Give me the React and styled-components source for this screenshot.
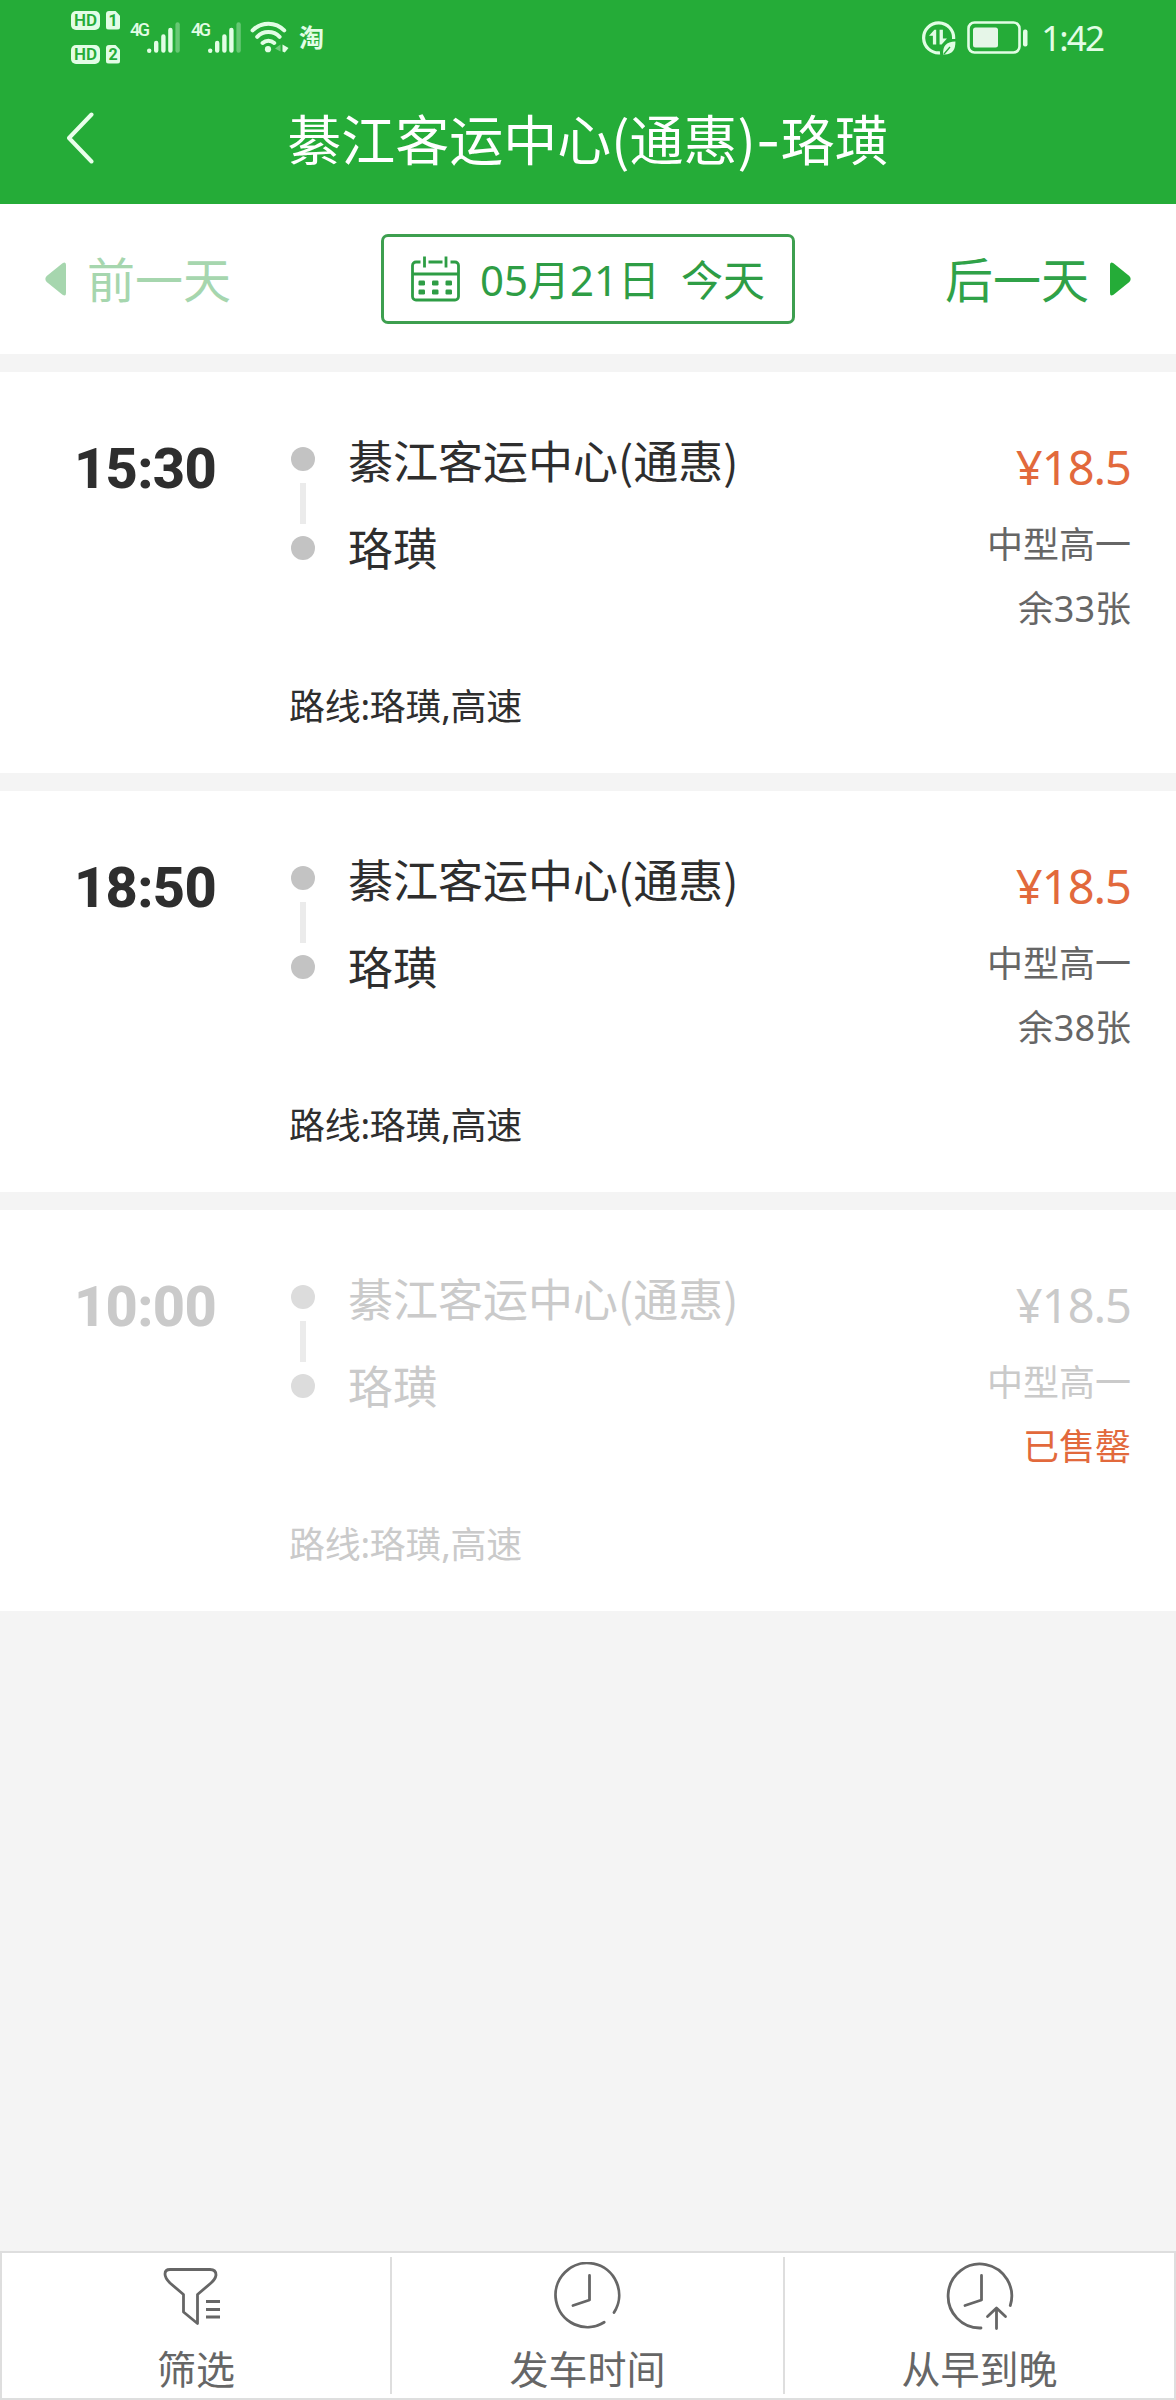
import React from "react";
import styled, { createGlobalStyle } from "styled-components";

const GREEN = "#25ac38";
const STATUS = "#e2fde5";
const LATIN = '"Noto Sans", "Noto Sans CJK SC", sans-serif';
const CJK = '"Noto Sans CJK SC", "Noto Sans", sans-serif';

const GlobalStyle = createGlobalStyle`
  * { box-sizing: border-box; }
  body { margin: 0; background: #f4f4f4; font-family: ${LATIN}; }
  svg { display: block; flex: none; }
`;

const Screen = styled.div`
  width: 1176px;
  min-height: 2400px;
  display: flex;
  flex-direction: column;
  background: #f4f4f4;
  white-space: nowrap;
`;

const Header = styled.header`
  height: 204px;
  background: ${GREEN};
  color: #fff;
`;

const StatusBar = styled.div`
  height: 75px;
  padding: 0 73px 0 71px;
  display: flex;
  justify-content: space-between;
  align-items: center;
  color: ${STATUS};
`;

const StatusGroup = styled.div`
  display: flex;
  align-items: center;
`;

const SimColumn = styled.div`
  display: grid;
  gap: 15px;
  margin-right: 10px;
  padding-bottom: 1px;
`;

const SimRow = styled.div`
  display: flex;
  gap: 6px;
`;

const HdBadge = styled.span`
  width: 29px;
  height: 19px;
  border-radius: 5px;
  background: ${STATUS};
  color: ${GREEN};
  font: 600 17px/19px "Roboto", sans-serif;
  text-align: center;
`;

const SimBadge = styled.span`
  width: 14px;
  height: 19px;
  border-radius: 3px;
  clip-path: polygon(0 0, 65% 0, 100% 28%, 100% 100%, 0 100%);
  background: ${STATUS};
  color: ${GREEN};
  font: 700 16px/20px "Roboto", sans-serif;
  text-align: center;
`;

const Signal = styled.div`
  display: flex;
  align-items: flex-start;
  width: 61px;
  height: 31px;
  padding-bottom: 1px;
`;

const Network = styled.span`
  width: 16px;
  font: 500 18px/15px "Roboto", sans-serif;
  letter-spacing: -2.4px;
`;

const WifiSlot = styled.span`
  margin: 0 0 2px -2px;
`;

const TaoBadge = styled.span`
  margin: 0 0 3px 10px;
  font: 700 25px/28px ${CJK};
`;

const BatterySlot = styled.span`
  margin: 0 12px 0 11px;
`;

const Clock = styled.span`
  font-size: 35px;
  line-height: 50px;
  letter-spacing: -1.9px;
`;

const NavBar = styled.div`
  height: 129px;
  padding: 0 67px 4px;
  display: grid;
  grid-template-columns: 1fr auto 1fr;
  align-items: center;
`;

const Title = styled.h1`
  margin: 0;
  padding-top: 5px;
  font: 400 54px/80px ${CJK};
`;

const Dash = styled.span`
  font-family: "Inter", sans-serif;
`;

const DateBar = styled.div`
  height: 150px;
  padding: 0 45px;
  display: grid;
  grid-template-columns: 1fr 414px 1fr;
  align-items: center;
  background: #fff;
`;

const DayLink = styled.div`
  display: flex;
  align-items: center;
  justify-content: ${(p) => (p.$end ? "flex-end" : "flex-start")};
  gap: 21px;
  color: ${(p) => (p.$muted ? "#a6d6ae" : "#30a248")};
  font-size: 48px;
  line-height: 70px;
`;

const DayLabel = styled.span`
  padding-top: 2px;
`;

const DateButton = styled.div`
  height: 90px;
  padding-left: 27px;
  border: 3px solid #3d9f4f;
  border-radius: 7px;
  display: flex;
  align-items: center;
  color: #2e9d45;
  font-size: 42px;
  line-height: 60px;
`;

const DateText = styled.span`
  margin: 2px 0 0 ${(p) => p.$gap}px;
`;

const List = styled.main`
  flex: 1;
  padding-top: 18px;
  display: flex;
  flex-direction: column;
  gap: 18px;
`;

const Card = styled.article`
  height: 401px;
  padding: 44px 45px 0 0;
  display: grid;
  grid-template-columns: 289px 59px 1fr auto;
  grid-template-rows: 225px 50px;
  row-gap: 41px;
  background: #fff;
  color: ${(p) => (p.$sold ? "#cacaca" : "#2e2e2e")};
`;

const Time = styled.div`
  padding: 15px 0 0 74px;
  font: 800 56px/76px "Roboto", sans-serif;
  letter-spacing: -0.7px;
`;

const Track = styled.div`
  padding: 31px 0 0 2px;
  width: 26px;
  display: flex;
  flex-direction: column;
  align-items: center;
  gap: 12px;
`;

const Dot = styled.span`
  width: 24px;
  height: 24px;
  border-radius: 50%;
  background: ${(p) => (p.$sold ? "#dcdcdc" : "#c3c3c3")};
`;

const Link = styled.span`
  width: 6px;
  height: 41px;
  background: #ebebeb;
`;

const Stations = styled.div`
  font: 400 45px/87px ${CJK};
`;

const Fare = styled.div`
  padding-top: 6px;
  text-align: right;
  color: ${(p) => (p.$sold ? "#cacaca" : "#666")};
  font-size: 36px;
  line-height: 64px;
`;

const Price = styled.div`
  color: ${(p) => (p.$sold ? "#cacaca" : "#e2693c")};
  font-size: 47px;
  line-height: 91px;
  letter-spacing: -1px;
`;

const Remaining = styled.div`
  color: ${(p) => (p.$sold ? "#e2693c" : "inherit")};
`;

const RouteNote = styled.div`
  grid-column: 2 / -1;
  font-size: 36px;
  line-height: 50px;
  letter-spacing: -0.3px;
`;

const TabBar = styled.footer`
  height: 149px;
  border: 2px solid #dedede;
  display: grid;
  grid-template-columns: 390px 393px 1fr;
  padding: 4px 0;
  background: #fff;
`;

const Tab = styled.div`
  padding-top: 5px;
  display: flex;
  flex-direction: column;
  align-items: center;
  color: #666;
  font-size: 39px;
  line-height: 50px;
  border-right: ${(p) => (p.$last ? 0 : 2)}px solid #dedede;
`;

const TabLabel = styled.span`
  margin-top: 12px;
`;

function SignalBars() {
  return (
    <svg width="34" height="31" viewBox="0 0 34 31" fill="none" stroke="currentColor" strokeWidth="4.4" strokeLinecap="round">
      <path d="M3.2 28.6v.1M10.2 21v7.6M17.4 14.5v14.1M24.4 8v20.6" />
      <path d="M31.6 2.5v26.1" opacity=".35" />
    </svg>
  );
}

function Wifi() {
  return (
    <svg width="39" height="32" viewBox="0 0 39 32" fill="none" stroke="currentColor" strokeWidth="4" strokeLinecap="round">
      <path d="M2.6 9.4a22 22 0 0 1 31.6 0M7.2 15.8a15.5 15.5 0 0 1 22.4 0M12.6 22a8.8 8.8 0 0 1 11.6 0" />
      <circle cx="18" cy="28.2" r="3.1" fill="currentColor" stroke="none" />
      <path d="M30.5 23.5v7L25 27.5z" fill="currentColor" stroke="none" opacity=".4" />
      <path d="M32.5 23.5l6 3.4-3.7 4.6-2.3-1z" fill="currentColor" stroke="none" />
    </svg>
  );
}

function DataSaver() {
  return (
    <svg width="34" height="34" viewBox="0 0 34 34" fill="none" stroke="currentColor">
      <path d="M18 31.8A15 15 0 1 1 31.6 18" strokeWidth="3.2" />
      <path d="M7 14.8L12.4 8.8H14.2V23.6H10.9V14.8zM25 17.6L19.6 23.6H17.6V8.8H20.9V17.6z" fill="currentColor" stroke="none" />
      <path d="M33.4 20.5C24 21 20.5 25 21.2 33.4 30 34 33.6 29 33.4 20.5z" fill="currentColor" stroke="none" />
      <path d="M22 33l6-7" stroke={GREEN} strokeWidth="1.3" />
    </svg>
  );
}

function Battery() {
  return (
    <svg width="62" height="34" viewBox="0 0 62 34">
      <rect x="1.5" y="1.5" width="51" height="30" rx="6" fill="none" stroke="currentColor" strokeWidth="2.6" />
      <rect x="6" y="6.5" width="25" height="20" rx="2.5" fill="#e6f6e8" />
      <rect x="56" y="8.5" width="4.5" height="17" rx="2" fill="currentColor" />
    </svg>
  );
}

function BackChevron() {
  return (
    <svg width="27" height="52" viewBox="0 0 27 52" fill="none" stroke="#e9ffeb" strokeWidth="4" strokeLinecap="round" strokeLinejoin="round">
      <path d="M24.5 2.5L2 26l22.5 23.5" />
    </svg>
  );
}

function Arrow({ right }) {
  return (
    <svg width="21" height="34" viewBox="0 0 21 34" fill={right ? GREEN : "#a6d6ae"} transform={right ? "scale(-1 1)" : undefined}>
      <path d="M17.5 1.2L1.7 14Q-1 17 1.7 20L17.5 32.8Q21 35 21 31V3Q21-1 17.5 1.2z" />
    </svg>
  );
}

function Calendar() {
  const cells = [24.5, 33.5].flatMap((y) => [7.5, 21, 34.5].map((x) => [x, y]));
  return (
    <svg width="49" height="46" viewBox="0 0 49 46" fill="none" stroke="currentColor" strokeWidth="2.8">
      <path d="M9.5 6H5a3.5 3.5 0 0 0-3.5 3.5v31A3.5 3.5 0 0 0 5 44h39a3.5 3.5 0 0 0 3.5-3.5v-31A3.5 3.5 0 0 0 44 6h-4.5M17.5 6h14M1.5 18h46M13.5.5v11M35 .5v11" />
      {cells.map(([x, y]) => (
        <rect key={x + "-" + y} x={x} y={y} width="6.5" height="5" rx="1.2" fill="currentColor" stroke="none" />
      ))}
    </svg>
  );
}

function TabIcon({ kind }) {
  const common = { width: 70, height: 70, viewBox: "0 0 70 70", fill: "none", stroke: "#666", strokeWidth: 2.8, strokeLinecap: "round", strokeLinejoin: "round" };
  if (kind === "filter")
    return (
      <svg {...common}>
        <path d="M9 7.5H49Q55 7.5 55 13Q54.5 17 50 21L36.5 32.5V61.5L22.5 50V32.5L9 21Q4 16 4 12Q4 7.5 9 7.5z" />
        <path d="M45 39.5h14M45 47.5h14M45 55h14" strokeLinecap="butt" />
      </svg>
    );
  if (kind === "clock")
    return (
      <svg {...common}>
        <path d="M51.2 60.2A31.8 32 0 1 1 61 50.5M36.5 13.5V38L20 43.5" />
      </svg>
    );
  return (
    <svg {...common}>
      <path d="M36 66A31.8 32 0 1 1 65.3 43.5M36.5 13.5V38L20 43.5" />
      <path d="M51.5 66.5V46.5M42.5 54.5l9-8.5 9 8.5" />
    </svg>
  );
}

const TRIPS = [
  { time: "15:30", left: "余33张" },
  { time: "18:50", left: "余38张" },
  { time: "10:00", left: "已售罄", sold: true },
];

const TABS = [
  { kind: "filter", label: "筛选" },
  { kind: "clock", label: "发车时间" },
  { kind: "order", label: "从早到晚" },
];

function Trip({ time, left, sold }) {
  return (
    <Card $sold={sold}>
      <Time>{time}</Time>
      <Track>
        <Dot $sold={sold} />
        <Link />
        <Dot $sold={sold} />
      </Track>
      <Stations>
        <div>綦江客运中心(通惠)</div>
        <div>珞璜</div>
      </Stations>
      <Fare $sold={sold}>
        <Price $sold={sold}>¥18.5</Price>
        <div>中型高一</div>
        <Remaining $sold={sold}>{left}</Remaining>
      </Fare>
      <RouteNote>路线:珞璜,高速</RouteNote>
    </Card>
  );
}

export default function App() {
  return (
    <Screen lang="zh-CN">
      <GlobalStyle />
      <Header>
        <StatusBar>
          <StatusGroup>
            <SimColumn>
              {[1, 2].map((n) => (
                <SimRow key={n}>
                  <HdBadge>HD</HdBadge>
                  <SimBadge>{n}</SimBadge>
                </SimRow>
              ))}
            </SimColumn>
            {[1, 2].map((n) => (
              <Signal key={n}>
                <Network>4G</Network>
                <SignalBars />
              </Signal>
            ))}
            <WifiSlot>
              <Wifi />
            </WifiSlot>
            <TaoBadge>淘</TaoBadge>
          </StatusGroup>
          <StatusGroup>
            <DataSaver />
            <BatterySlot>
              <Battery />
            </BatterySlot>
            <Clock>1:42</Clock>
          </StatusGroup>
        </StatusBar>
        <NavBar>
          <BackChevron />
          <Title>
            綦江客运中心(通惠)<Dash>-</Dash>珞璜
          </Title>
        </NavBar>
      </Header>
      <DateBar>
        <DayLink $muted>
          <Arrow />
          <DayLabel>前一天</DayLabel>
        </DayLink>
        <DateButton>
          <Calendar />
          <DateText $gap={20}>05月21日</DateText>
          <DateText $gap={21}>今天</DateText>
        </DateButton>
        <DayLink $end>
          <DayLabel>后一天</DayLabel>
          <Arrow right />
        </DayLink>
      </DateBar>
      <List>
        {TRIPS.map((trip) => (
          <Trip key={trip.time} {...trip} />
        ))}
      </List>
      <TabBar>
        {TABS.map((tab, i) => (
          <Tab key={tab.kind} $last={i === 2}>
            <TabIcon kind={tab.kind} />
            <TabLabel>{tab.label}</TabLabel>
          </Tab>
        ))}
      </TabBar>
    </Screen>
  );
}
